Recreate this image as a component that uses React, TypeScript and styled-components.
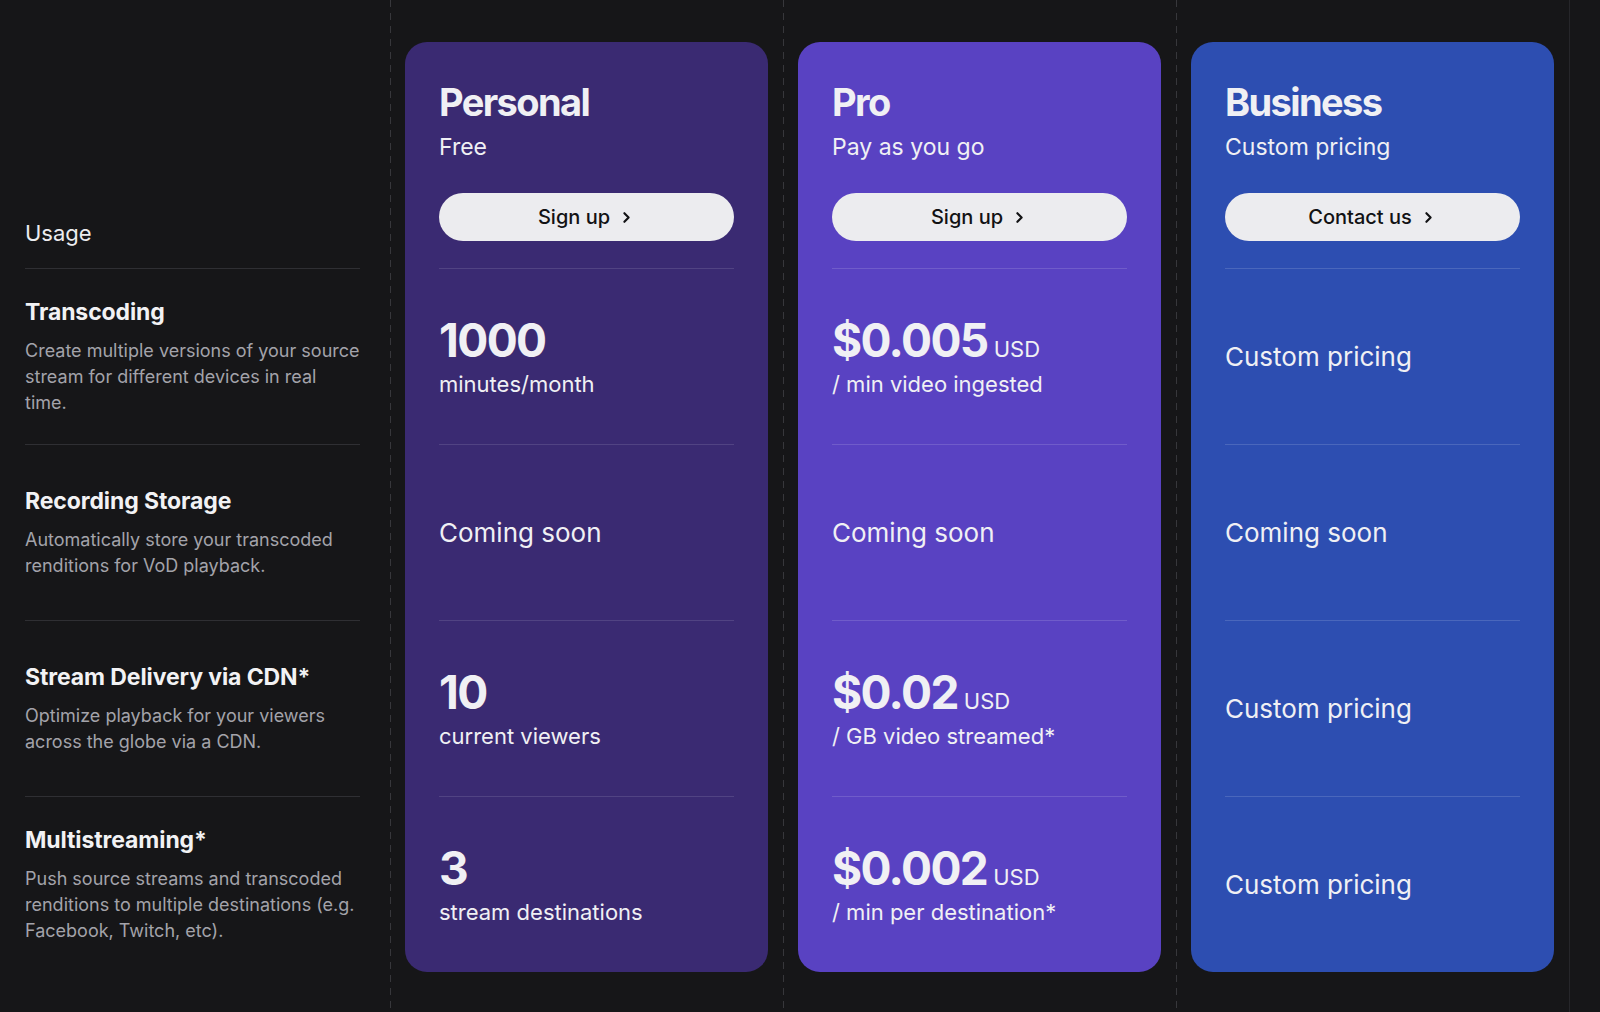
import React from 'react';
import styled, { createGlobalStyle } from 'styled-components';
import { ChevronRight } from 'lucide-react';

const GlobalStyle = createGlobalStyle`
  html, body {
    margin: 0;
    padding: 0;
    background: #161618;
    font-family: Inter, 'Noto Sans', 'Liberation Sans', sans-serif;
    -webkit-font-smoothing: antialiased;
  }
  * { box-sizing: border-box; }
`;

const Page = styled.div`
  display: grid;
  grid-template-columns: 390px repeat(3, 393px) 1fr;
  min-height: 1012px;
  background: #161618;
`;

const FeatureColumn = styled.div`
  padding: 42px 30px 0 25px;
`;

const PlanColumn = styled.div`
  padding: 42px 15px 0 15px;
  background: linear-gradient(to bottom, #37373b 0 7px, transparent 7px 13px) left top / 1px 13px repeat-y;
`;

const Edge = styled.div`
  border-left: 1px solid #26262a;
`;

const FeatureHead = styled.div`
  height: 226px;
  display: flex;
  align-items: flex-end;
  padding-bottom: 21px;
  color: #ececef;
  font-size: 22px;
  line-height: 28px;
`;

const Row = styled.div<{ $line: string }>`
  height: 176px;
  border-top: 1px solid ${(p) => p.$line};
  display: flex;
  flex-direction: column;
  justify-content: center;
`;

const FeatureTitle = styled.div`
  color: #f2f2f4;
  font-size: 23px;
  font-weight: 700;
  line-height: 30px;
  letter-spacing: -0.1px;
`;

const FeatureDesc = styled.div`
  margin-top: 11px;
  color: #a3a3aa;
  font-size: 18px;
  line-height: 26px;
`;

const Card = styled.div<{ $bg: string }>`
  background: ${(p) => p.$bg};
  border-radius: 22px;
  padding: 0 34px;
  height: 930px;
  color: #f0f0f4;
`;

const CardHead = styled.div`
  height: 226px;
  padding-top: 37px;
`;

const PlanName = styled.div`
  font-size: 38px;
  font-weight: 700;
  line-height: 46px;
  letter-spacing: -1.6px;
  margin-bottom: 7px;
`;

const PlanPrice = styled.div`
  font-size: 23px;
  line-height: 30px;
`;

const ActionButton = styled.button`
  margin-top: 31px;
  width: 100%;
  height: 48px;
  border: none;
  border-radius: 24px;
  background: #ececef;
  color: #121214;
  font-family: inherit;
  font-size: 20px;
  font-weight: 500;
  display: flex;
  align-items: center;
  justify-content: center;
  gap: 8px;
  cursor: pointer;
`;

const Amount = styled.div`
  display: flex;
  align-items: baseline;
  gap: 6px;
`;

const BigNumber = styled.span`
  font-size: 46px;
  font-weight: 700;
  line-height: 50px;
  letter-spacing: -1.6px;
`;

const Currency = styled.span`
  font-size: 22px;
  line-height: 28px;
`;

const Unit = styled.div`
  margin-top: 5px;
  font-size: 22px;
  line-height: 28px;
`;

const Note = styled.div`
  font-size: 26px;
  line-height: 34px;
`;

type Cell = { value?: string; usd?: boolean; unit?: string; note?: string };

type Plan = { name: string; price: string; action: string; bg: string; line: string; cells: Cell[] };

const features = [
  { title: 'Transcoding', desc: 'Create multiple versions of your source stream for different devices in real time.' },
  { title: 'Recording Storage', desc: 'Automatically store your transcoded renditions for VoD playback.' },
  { title: 'Stream Delivery via CDN*', desc: 'Optimize playback for your viewers across the globe via a CDN.' },
  { title: 'Multistreaming*', desc: 'Push source streams and transcoded renditions to multiple destinations (e.g. Facebook, Twitch, etc).' },
];

const plans: Plan[] = [
  {
    name: 'Personal',
    price: 'Free',
    action: 'Sign up',
    bg: '#3a2a72',
    line: 'rgba(255,255,255,0.12)',
    cells: [
      { value: '1000', unit: 'minutes/month' },
      { note: 'Coming soon' },
      { value: '10', unit: 'current viewers' },
      { value: '3', unit: 'stream destinations' },
    ],
  },
  {
    name: 'Pro',
    price: 'Pay as you go',
    action: 'Sign up',
    bg: '#5942c2',
    line: 'rgba(255,255,255,0.14)',
    cells: [
      { value: '$0.005', usd: true, unit: '/ min video ingested' },
      { note: 'Coming soon' },
      { value: '$0.02', usd: true, unit: '/ GB video streamed*' },
      { value: '$0.002', usd: true, unit: '/ min per destination*' },
    ],
  },
  {
    name: 'Business',
    price: 'Custom pricing',
    action: 'Contact us',
    bg: '#2d4eb1',
    line: 'rgba(255,255,255,0.14)',
    cells: [
      { note: 'Custom pricing' },
      { note: 'Coming soon' },
      { note: 'Custom pricing' },
      { note: 'Custom pricing' },
    ],
  },
];

const PlanCard: React.FC<{ plan: Plan }> = ({ plan }) => (
  <Card $bg={plan.bg}>
    <CardHead>
      <PlanName>{plan.name}</PlanName>
      <PlanPrice>{plan.price}</PlanPrice>
      <ActionButton>
        {plan.action}
        <ChevronRight size={17} strokeWidth={3} />
      </ActionButton>
    </CardHead>
    {plan.cells.map((cell, i) => (
      <Row key={i} $line={plan.line}>
        {cell.note ? (
          <Note>{cell.note}</Note>
        ) : (
          <>
            <Amount>
              <BigNumber>{cell.value}</BigNumber>
              {cell.usd && <Currency>USD</Currency>}
            </Amount>
            <Unit>{cell.unit}</Unit>
          </>
        )}
      </Row>
    ))}
  </Card>
);

export default function App() {
  return (
    <>
      <GlobalStyle />
      <Page>
        <FeatureColumn>
          <FeatureHead>Usage</FeatureHead>
          {features.map((f) => (
            <Row key={f.title} $line="#2f2f33">
              <FeatureTitle>{f.title}</FeatureTitle>
              <FeatureDesc>{f.desc}</FeatureDesc>
            </Row>
          ))}
        </FeatureColumn>
        {plans.map((p) => (
          <PlanColumn key={p.name}>
            <PlanCard plan={p} />
          </PlanColumn>
        ))}
        <Edge />
      </Page>
    </>
  );
}
